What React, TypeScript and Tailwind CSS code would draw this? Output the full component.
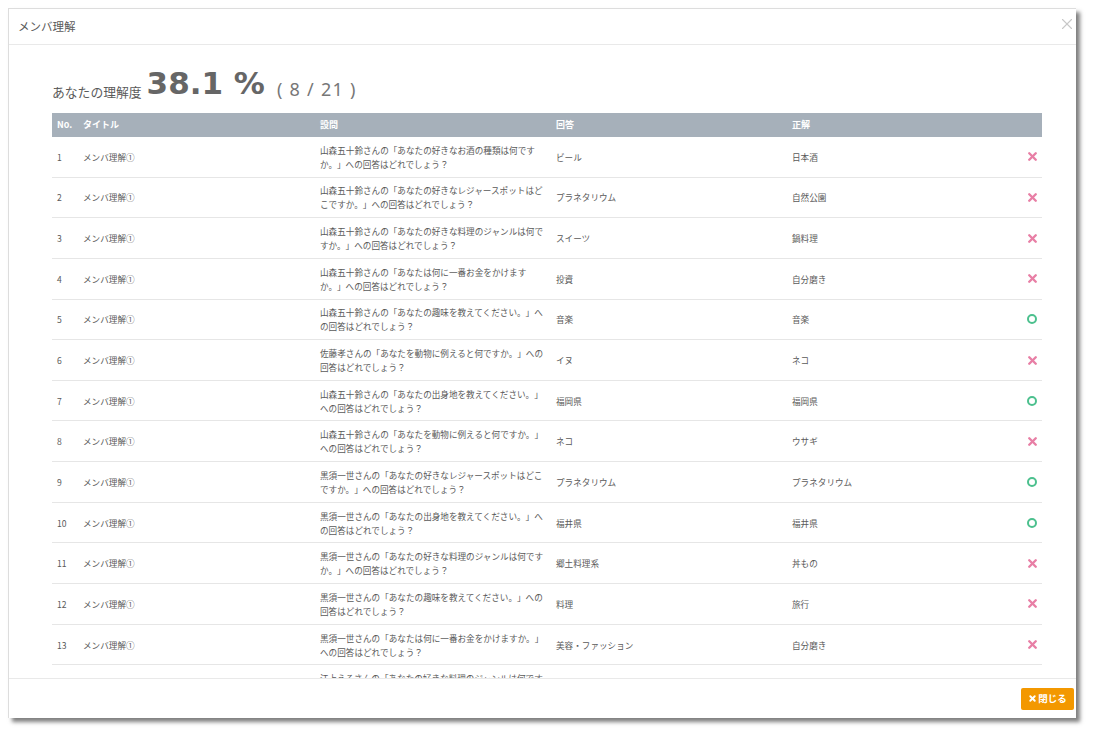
import React from 'react';
import { X } from 'lucide-react';

const rows = [
  { title: 'メンバ理解①', q: '山森五十鈴さんの「あなたの好きなお酒の種類は何ですか。」への回答はどれでしょう？', a: 'ビール', c: '日本酒', ok: false },
  { title: 'メンバ理解①', q: '山森五十鈴さんの「あなたの好きなレジャースポットはどこですか。」への回答はどれでしょう？', a: 'プラネタリウム', c: '自然公園', ok: false },
  { title: 'メンバ理解①', q: '山森五十鈴さんの「あなたの好きな料理のジャンルは何ですか。」への回答はどれでしょう？', a: 'スイーツ', c: '鍋料理', ok: false },
  { title: 'メンバ理解①', q: '山森五十鈴さんの「あなたは何に一番お金をかけますか。」への回答はどれでしょう？', a: '投資', c: '自分磨き', ok: false },
  { title: 'メンバ理解①', q: '山森五十鈴さんの「あなたの趣味を教えてください。」への回答はどれでしょう？', a: '音楽', c: '音楽', ok: true },
  { title: 'メンバ理解①', q: '佐藤孝さんの「あなたを動物に例えると何ですか。」への回答はどれでしょう？', a: 'イヌ', c: 'ネコ', ok: false },
  { title: 'メンバ理解①', q: '山森五十鈴さんの「あなたの出身地を教えてください。」への回答はどれでしょう？', a: '福岡県', c: '福岡県', ok: true },
  { title: 'メンバ理解①', q: '山森五十鈴さんの「あなたを動物に例えると何ですか。」への回答はどれでしょう？', a: 'ネコ', c: 'ウサギ', ok: false },
  { title: 'メンバ理解①', q: '黒須一世さんの「あなたの好きなレジャースポットはどこですか。」への回答はどれでしょう？', a: 'プラネタリウム', c: 'プラネタリウム', ok: true },
  { title: 'メンバ理解①', q: '黒須一世さんの「あなたの出身地を教えてください。」への回答はどれでしょう？', a: '福井県', c: '福井県', ok: true },
  { title: 'メンバ理解①', q: '黒須一世さんの「あなたの好きな料理のジャンルは何ですか。」への回答はどれでしょう？', a: '郷土料理系', c: '丼もの', ok: false },
  { title: 'メンバ理解①', q: '黒須一世さんの「あなたの趣味を教えてください。」への回答はどれでしょう？', a: '料理', c: '旅行', ok: false },
  { title: 'メンバ理解①', q: '黒須一世さんの「あなたは何に一番お金をかけますか。」への回答はどれでしょう？', a: '美容・ファッション', c: '自分磨き', ok: false },
  { title: 'メンバ理解①', q: '江上えるさんの「あなたの好きな料理のジャンルは何ですか。」への回答はどれでしょう？', a: '', c: '', ok: false },
];

const cols = 'grid grid-cols-[26px_237px_236px_236px_1fr_30px]';

export default function App() {
  return (
    <div className="h-[735px] w-[1103px] overflow-hidden bg-white pl-2 pt-2 font-['Noto_Sans_CJK_JP',sans-serif] text-[#5a5a5a] [text-spacing-trim:space-all]">
      <div className="flex h-[710px] w-[1068px] flex-col border-l border-t border-[#ddd] bg-white shadow-[4px_4px_4px_rgba(0,0,0,0.5)]">
        <div className="flex h-9 shrink-0 items-center justify-between border-b border-[#e9e9e9] pl-[9px] pr-0">
          <span className="text-[11.5px]">メンバ理解</span>
          <X className="mb-[6px] h-[18px] w-[18px] text-[#c8c8c8]" strokeWidth={1.5} />
        </div>

        <div className="min-h-0 flex-1 overflow-hidden pl-[43px] pr-[34px]">
          <div className="flex h-[68px] items-end pb-[12px]">
            <span className="mb-0 text-[12.8px]">あなたの理解度</span>
            <span className="ml-[5px] font-['DejaVu_Sans',sans-serif] text-[31px] leading-9 font-bold text-[#666]">38.1 %</span>
            <span className="mb-0 ml-[12px] font-['Noto_Sans',sans-serif] text-[18px] leading-6 tracking-[0.07em] text-[#777]">( 8 / 21 )</span>
          </div>

          <div className={`${cols} h-6 items-center bg-[#a6b0ba] pl-[5px] text-[9px] font-bold text-white`}>
            <span>No.</span>
            <span>タイトル</span>
            <span>設問</span>
            <span>回答</span>
            <span>正解</span>
            <span />
          </div>

          {rows.map((r, i) => (
            <div
              key={i}
              className={`${cols} h-[40.65px] items-center border-b border-[#e6e6e6] pl-[5px] text-[8.6px] leading-[14px]`}
            >
              <span>{i + 1}</span>
              <span>{r.title}</span>
              <span className="w-[226px]">{r.q}</span>
              <span>{r.a}</span>
              <span>{r.c}</span>
              <span className="flex justify-end">
                {r.ok ? (
                  <span className="mr-[5px] h-[10px] w-[10px] rounded-full border-2 border-[#4cc08e]" />
                ) : (
                  <X className="mr-[3px] h-[13px] w-[13px] text-[#e87fa5]" strokeWidth={4.5} />
                )}
              </span>
            </div>
          ))}
        </div>

        <div className="flex h-10 shrink-0 items-center justify-end border-t border-[#e9e9e9] pr-[2px]">
          <button className="flex h-[22px] w-[53px] items-center justify-center gap-[1px] rounded-[2px] bg-[#f39800] text-[9.5px] font-bold text-white">
            <X className="h-[9px] w-[9px]" strokeWidth={5} />
            閉じる
          </button>
        </div>
      </div>
    </div>
  );
}
